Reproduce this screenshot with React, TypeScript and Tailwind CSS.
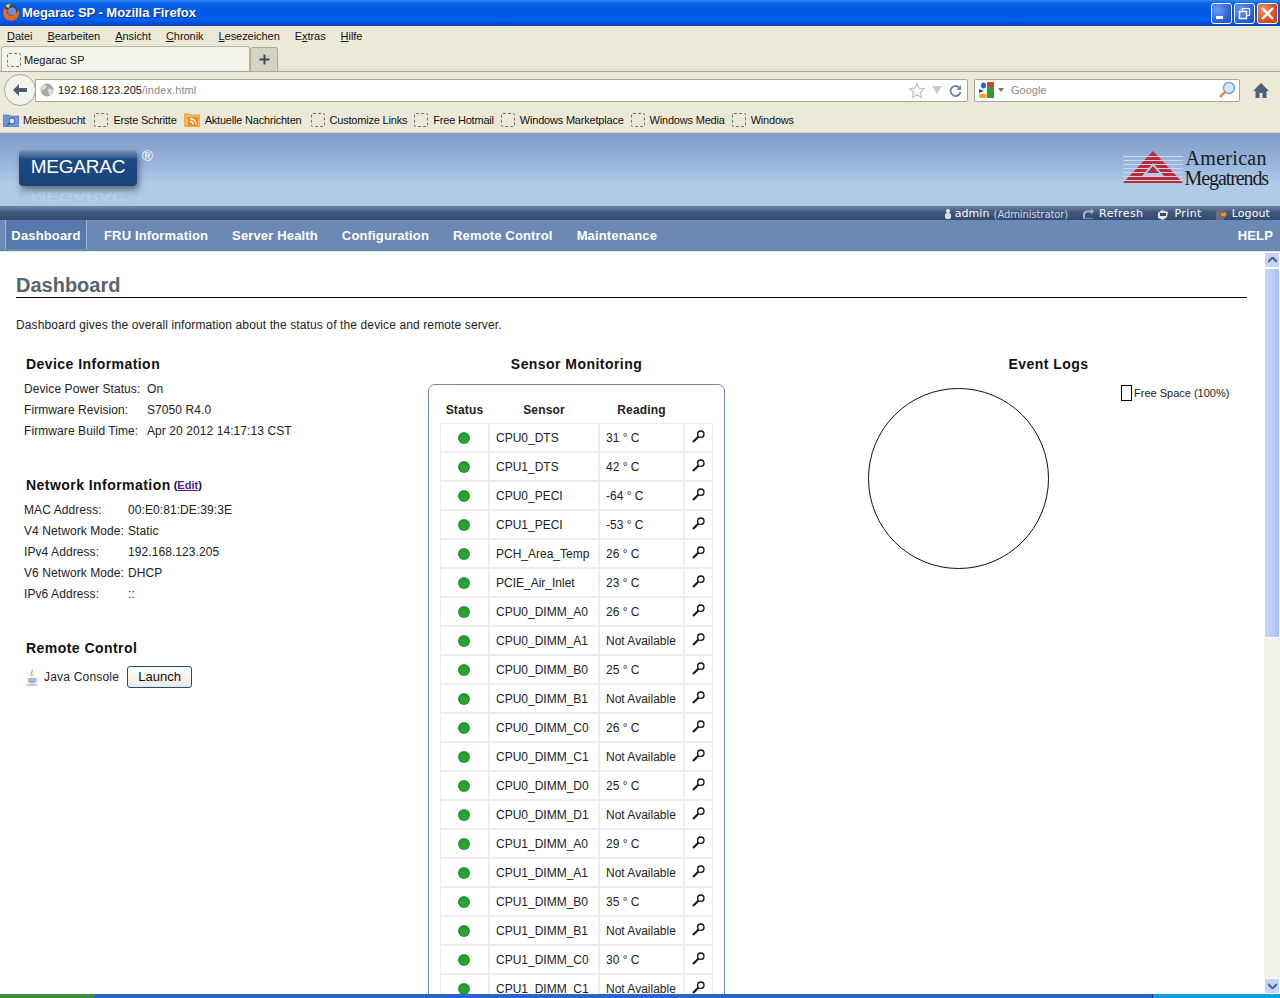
import React from "react";

const MENU = ["Datei", "Bearbeiten", "Ansicht", "Chronik", "Lesezeichen", "Extras", "Hilfe"];
const UNDERLINE: Record<string, number> = { Extras: 1 };
const NAV = ["FRU Information", "Server Health", "Configuration", "Remote Control", "Maintenance"];
const BOOKMARKS = ["Erste Schritte", "Aktuelle Nachrichten", "Customize Links", "Free Hotmail", "Windows Marketplace", "Windows Media", "Windows"];
const DEVICE = [
	["Device Power Status:", "On"],
	["Firmware Revision:", "S7050 R4.0"],
	["Firmware Build Time:", "Apr 20 2012 14:17:13 CST"],
];
const NETWORK = [
	["MAC Address:", "00:E0:81:DE:39:3E"],
	["V4 Network Mode:", "Static"],
	["IPv4 Address:", "192.168.123.205"],
	["V6 Network Mode:", "DHCP"],
	["IPv6 Address:", "::"],
];
const SENSORS = [
	["CPU0_DTS", "31 ° C"],
	["CPU1_DTS", "42 ° C"],
	["CPU0_PECI", "-64 ° C"],
	["CPU1_PECI", "-53 ° C"],
	["PCH_Area_Temp", "26 ° C"],
	["PCIE_Air_Inlet", "23 ° C"],
	["CPU0_DIMM_A0", "26 ° C"],
	["CPU0_DIMM_A1", "Not Available"],
	["CPU0_DIMM_B0", "25 ° C"],
	["CPU0_DIMM_B1", "Not Available"],
	["CPU0_DIMM_C0", "26 ° C"],
	["CPU0_DIMM_C1", "Not Available"],
	["CPU0_DIMM_D0", "25 ° C"],
	["CPU0_DIMM_D1", "Not Available"],
	["CPU1_DIMM_A0", "29 ° C"],
	["CPU1_DIMM_A1", "Not Available"],
	["CPU1_DIMM_B0", "35 ° C"],
	["CPU1_DIMM_B1", "Not Available"],
	["CPU1_DIMM_C0", "30 ° C"],
	["CPU1_DIMM_C1", "Not Available"],
];

const Placeholder = () => (
	<span className="block w-[14px] h-[14px] shrink-0 rounded-[2px] border border-dashed border-[#77756c]" />
);

const FirefoxLogo = () => (
	<svg width="18" height="18" viewBox="0 0 17 17" className="shrink-0">
		<circle cx="8.500" cy="8.500" r="7.500" fill="#27408f" />
		<circle cx="9.500" cy="7" r="3.800" fill="#6f8fd0" />
		<path d="M1.500 3c.2 3-1.500 6 1 10 3 3.800 9.500 3.800 12.200 0 2-3 1.500-6.500.5-8 0 2-1.500 3.500-2.700 4-1 2-4 3-6 1.500C4.500 9 4.500 7 6 5.500 4.500 5.500 2.500 5 1.500 3z" fill="#ee6a12" />
		<path d="M3.500 1c1.500-1 4-1 5 0C7 1.500 6 3 7 4.200 5.500 4 4 3 3.500 1z" fill="#fbbb2e" />
	</svg>
);

const Magnifier = () => (
	<svg width="13" height="13" viewBox="0 0 13 13" className="block mb-[2px]">
		<circle cx="8.800" cy="4.200" r="3.200" fill="none" stroke="#111" strokeWidth="1.300" />
		<path d="M6.300 6.700 1 12" stroke="#111" strokeWidth="2" />
	</svg>
);

const WindowButton = ({ kind }: { kind: "min" | "max" | "close" }) => (
	<span
		className={`flex items-center justify-center w-[21px] h-[21px] rounded-[3px] border border-white ${
			kind === "close"
				? "bg-[radial-gradient(circle_at_30%_30%,#f0906a,#d9441e_70%)]"
				: "bg-[radial-gradient(circle_at_30%_30%,#6f9bf0,#1f57d8_75%)]"
		}`}
	>
		<svg width="15" height="15" viewBox="0 0 15 15">
			{kind === "min" && <rect x="2" y="10" width="7" height="3" fill="#fff" />}
			{kind === "max" && (
				<g fill="none" stroke="#fff">
					<rect x="2.500" y="5.500" width="7" height="7" strokeWidth="1.400" />
					<path d="M5.500 5V2.500h7v7H10" strokeWidth="1.200" />
				</g>
			)}
			{kind === "close" && <path d="M2 2 13 13M13 2 2 13" stroke="#fff" strokeWidth="2.400" />}
		</svg>
	</span>
);

const BrowserChrome = () => (
	<div className="shrink-0 font-['Liberation_Sans',sans-serif] text-[11px] text-[#111] bg-[#ece9d8]">
		{/* title bar */}
		<div className="h-[26px] flex items-center pl-[2px] pr-[2px] bg-[linear-gradient(180deg,#2f86f5_0px,#0a5ee6_4px,#0058e6_14px,#0260ee_20px,#0046c4_25px,#003aa8_26px)]">
			<FirefoxLogo />
			<span className="ml-[2px] text-white font-bold text-[13px] tracking-[-0.05px] [text-shadow:1px_1px_0_#0a2f8a]">
				Megarac SP - Mozilla Firefox
			</span>
			<span className="ml-auto flex gap-[2px]">
				<WindowButton kind="min" />
				<WindowButton kind="max" />
				<WindowButton kind="close" />
			</span>
		</div>
		{/* menu */}
		<div className="h-[20px] flex items-center pl-[7px] gap-[15px] tracking-[-0.05px]">
			{MENU.map(item => {
				const at = UNDERLINE[item] ?? 0;
				return (
					<span key={item} className="leading-none">
						{item.slice(0, at)}
						<span className="underline">{item[at]}</span>
						{item.slice(at + 1)}
					</span>
				);
			})}
		</div>
		{/* tabs */}
		<div className="h-[26px] flex items-end border-b border-[#a8a595] bg-[linear-gradient(180deg,#ece9d8_70%,#e3e0cf)]">
			<div className="w-[249px] h-[25px] ml-[1px] flex items-center gap-[3px] pl-[5px] pt-[2px] bg-[#f5f4ec] border border-b-0 border-[#b5b2a2] rounded-t-[3px]">
				<Placeholder />
				<span>Megarac SP</span>
			</div>
			<div className="w-[28px] h-[24px] flex items-center justify-center bg-[#d6d3c3] border border-b-0 border-[#aaa798] rounded-t-[3px]">
				<svg width="11" height="11" viewBox="0 0 11 11">
					<path d="M5.500 .5v10M.5 5.500h10" stroke="#3d4a5e" strokeWidth="2" />
				</svg>
			</div>
		</div>
		{/* address bar */}
		<div className="h-[34px] flex items-center relative pt-[2px] pl-[35px] pr-[8px] gap-[6px]">
			<span className="absolute left-[4px] top-[2px] w-[32px] h-[32px] rounded-full bg-[#f4f3ee] border border-[#a9a79a] flex items-center justify-center z-10">
				<svg width="18" height="16" viewBox="0 0 18 16">
					<path d="M8 2 2 8l6 6V10h8V6H8z" fill="#4d5b70" />
				</svg>
			</span>
			<div className="w-[933px] h-[23px] flex items-center bg-white border border-[#a8a595] rounded-r-[2px] pl-[4px] pr-[5px]">
				<svg width="14" height="14" viewBox="0 0 14 14" className="shrink-0">
					<circle cx="7" cy="7" r="6.500" fill="#a9a9a6" />
					<path d="M4 2c2 0 3 1 2.500 2.500S3.500 6 2.500 8 1 5 2 3.500zM8 6c2-1 4 0 5 2-1 3-2 4.500-3.500 4.500C9 10 7 8 8 6z" fill="#dcdcd8" />
				</svg>
				<span className="ml-[4px] text-[#111] tracking-[0.1px]">
					192.168.123.205<span className="text-[#8a8a8a]">/index.html</span>
				</span>
				<svg width="18" height="17" viewBox="0 0 18 17" className="ml-auto">
					<path d="m9 1.500 2.200 4.700 5.100.6-3.800 3.500 1 5.100L9 13l-4.500 2.400 1-5.100L1.700 6.800l5.100-.6z" fill="#fafafa" stroke="#c3c3c0" strokeWidth="1.200" />
				</svg>
				<svg width="10" height="8" viewBox="0 0 10 8" className="ml-[6px]">
					<path d="M0 0h10L5 8z" fill="#c9c9c5" />
				</svg>
				<svg width="13" height="13" viewBox="0 0 13 13" className="ml-[7px]">
					<path d="M11 4.500A5 5 0 1 0 11.500 8" fill="none" stroke="#76889f" strokeWidth="2" />
					<path d="M12 1v5H7.500z" fill="#76889f" />
				</svg>
			</div>
			<div className="w-[266px] h-[23px] flex items-center bg-white border border-[#a8a595] rounded-[2px] pl-[4px] pr-[3px]">
				<svg width="16" height="16" viewBox="0 0 16 16" className="shrink-0">
					<rect x="8" y="0" width="7" height="5" fill="#d9402c" />
					<rect x="8" y="5" width="7" height="11" fill="#2f9a3a" />
					<ellipse cx="4.500" cy="3.500" rx="2.500" ry="3" fill="#2763c9" />
					<path d="M0 7l5 2-5 2z" fill="#1f4f9e" />
					<ellipse cx="4" cy="14" rx="4" ry="2.400" fill="#eea920" />
				</svg>
				<svg width="6" height="4" viewBox="0 0 6 4" className="ml-[3px]">
					<path d="M0 0h6L3 4z" fill="#777" />
				</svg>
				<span className="ml-[7px] text-[#8f8f8a]">Google</span>
				<svg width="18" height="18" viewBox="0 0 18 18" className="ml-auto">
					<circle cx="11" cy="7" r="5.500" fill="#d7e5fb" stroke="#7d9fdc" strokeWidth="1.500" />
					<path d="M7 11 2 16" stroke="#d18a3c" strokeWidth="2.400" />
				</svg>
			</div>
			<svg width="16" height="15" viewBox="0 0 16 15" className="ml-[7px]">
				<path d="M8 0 0 8h2.500v7h4v-5h3v5h4V8H16z" fill="#4f6079" />
			</svg>
		</div>
		{/* bookmarks */}
		<div className="h-[26px] flex items-center pl-[3px] pt-[2px] tracking-[-0.2px]">
			<span className="flex items-center gap-[4px] mr-[9px]">
				<svg width="16" height="14" viewBox="0 0 16 14">
					<path d="M0 2h6l1 1h9v11H0z" fill="#6f97d6" stroke="#4a6fa8" strokeWidth=".6" />
					<circle cx="9" cy="8" r="3" fill="#dce9fb" stroke="#2f5a9a" />
					<path d="M7 10 4 12.500" stroke="#2f5a9a" strokeWidth="1.400" />
				</svg>
				Meistbesucht
			</span>
			<span className="flex items-center gap-[5px] mr-[7px]">
				<Placeholder />
				{BOOKMARKS[0]}
			</span>
			<span className="flex items-center gap-[5px] mr-[9px]">
				<svg width="16" height="14" viewBox="0 0 16 14">
					<path d="M0 1h6l1 1h9v12H0z" fill="#f3b566" stroke="#d98a2c" strokeWidth=".6" />
					<rect x="4" y="4" width="10" height="9" fill="#ec8a24" />
					<path d="M6 11.500h.1M6 8.500a3 3 0 0 1 3 3M6 5.500a6 6 0 0 1 6 6" stroke="#fff" strokeWidth="1.300" fill="none" />
				</svg>
				{BOOKMARKS[1]}
			</span>
			{BOOKMARKS.slice(2).map(item => (
				<span key={item} className="flex items-center gap-[5px] mr-[7px]">
					<Placeholder />
					{item}
				</span>
			))}
		</div>
	</div>
);

const AppHeader = () => (
	<div className="shrink-0 border-t border-[#d8d5c4]">
		<div className="h-[73px] relative flex items-center justify-between bg-[linear-gradient(180deg,#7e9bc8,#9ab6dc_32px,#b0cae8_50px)]">
			<div className="relative ml-[19px] -mt-[4px] w-[118px] h-[36px] rounded-[4px] bg-[linear-gradient(180deg,#7c93b4_0px,#47699a_6px,#1d4a86_9px,#1a4277)] shadow-[2px_4px_6px_rgba(40,50,70,0.6)] flex items-center justify-center font-['Liberation_Sans',sans-serif] text-[19px] tracking-[-0.2px] text-white">
				MEGARAC
				<span className="absolute left-[123px] -top-[2px] text-[15px] leading-none text-white">®</span>
				<span className="absolute left-0 top-[38px] w-[118px] h-[18px] flex items-start justify-center pt-[2px] text-[19px] leading-[14px] text-[#c9d8ec] opacity-50 scale-y-[-0.6] bg-[linear-gradient(0deg,#9fb6d6,#b0cae8)]">
					MEGARAC
				</span>
			</div>
			<div className="flex items-center mr-[12px] -mt-[3px]">
				<svg width="60" height="33" viewBox="0 0 60 33" className="shrink-0 -mt-[2px]">
					<path d="M30 0 60 32H0z" fill="#bf2a34" />
					<g stroke="#c9d8ec" strokeWidth="1">
						<path d="M0 29.500h60M0 25.500h60M0 21.500h60M0 17.500h60M0 13.500h60M0 9.500h60M0 5.500h60" />
					</g>
					<path d="M30 12 41 25H19z" fill="#b0cae8" />
					<path d="M30 15 36 22H24z" fill="#bf2a34" />
				</svg>
				<div className="font-['Liberation_Serif',serif] text-[20px] leading-[20px] text-[#1a1a1a] ml-[2px]">
					<div className="pl-[1px] tracking-[0.3px]">American</div>
					<div className="tracking-[-1.1px]">Megatrends</div>
				</div>
			</div>
		</div>
		<div className="h-[14px] flex items-center justify-end gap-[14px] pt-[2px] pr-[10px] font-['DejaVu_Sans',sans-serif] text-[11px] text-white tracking-[0.4px] bg-[linear-gradient(180deg,#6f87a8,#41597c_6px,#334a6d)]">
			<span className="flex items-center gap-[4px] tracking-[0.1px]">
				<svg width="6" height="10" viewBox="0 0 6 10">
					<circle cx="3" cy="2" r="2" fill="#eee" />
					<rect x="0" y="4" width="6" height="6" rx="2" fill="#ddd" />
				</svg>
				admin <span className="text-[10px] tracking-[-0.1px] text-[#cbd6e6]">(Administrator)</span>
			</span>
			<span className="flex items-center gap-[5px]">
				<svg width="12" height="11" viewBox="0 0 12 11">
					<path d="M10 2.500H5C3 2.500 2 4 2 6v3.500" fill="none" stroke="#a8b2c0" strokeWidth="2" />
					<path d="M9 0l3 2.500L9 5zM2 9.500h9" fill="#a8b2c0" stroke="#a8b2c0" strokeWidth=".6" />
				</svg>
				Refresh
			</span>
			<span className="flex items-center gap-[5px]">
				<svg width="12" height="11" viewBox="0 0 12 11">
					<path d="M1 4 5 1l6 2-1 5-4 3-5-2z" fill="#e2e6ec" />
					<path d="M3 4h6v3H3z" fill="#3a4a64" />
				</svg>
				Print
			</span>
			<span className="flex items-center gap-[5px] tracking-[0.1px]">
				<svg width="11" height="11" viewBox="0 0 11 11">
					<rect x="0" y="0" width="8" height="11" fill="#6c6f78" />
					<path d="M5 4h3V2l3 3.500-3 3V7H5z" fill="#e8922a" />
				</svg>
				Logout
			</span>
		</div>
		<div className="h-[31px] flex items-center justify-between bg-[#6b89b4] border-b border-[#5f8ea0] font-['Liberation_Sans',sans-serif] font-bold text-[13px] tracking-[0.15px] text-white">
			<div className="flex items-start pl-[5px] h-full">
				<span className="h-[29px] w-[82px] pt-[2px] flex items-center justify-center bg-[#567aab] border-x border-[#9bb5d6]">
					Dashboard
				</span>
				<div className="flex items-center h-full pt-[1px] gap-[24px] ml-[17px]">
					{NAV.map(item => (
						<span key={item}>{item}</span>
					))}
				</div>
			</div>
			<span className="pr-[7px] pt-[1px]">HELP</span>
		</div>
	</div>
);

const Scrollbar = () => (
	<div className="w-[16px] shrink-0 flex flex-col bg-[#f3f2ea]">
		<div className="h-[16px] rounded-[2px] bg-[#c3d5fb] border border-white flex items-center justify-center">
			<svg width="9" height="6" viewBox="0 0 9 6">
				<path d="M0 5 4.500 .5 9 5" fill="none" stroke="#4d6185" strokeWidth="2" />
			</svg>
		</div>
		<div className="h-[370px] rounded-[2px] bg-[linear-gradient(90deg,#c3d5fb,#b9cdfa_60%,#a9c0f4)] border border-white" />
		<div className="flex-1" />
		<div className="h-[16px] rounded-[2px] bg-[#c3d5fb] border border-white flex items-center justify-center">
			<svg width="9" height="6" viewBox="0 0 9 6">
				<path d="M0 1 4.500 5.500 9 1" fill="none" stroke="#4d6185" strokeWidth="2" />
			</svg>
		</div>
	</div>
);

const InfoRows = ({ rows, labelWidth }: { rows: string[][]; labelWidth: string }) => (
	<div className="mt-[4px] ml-[8px] tracking-[0.08px]">
		{rows.map(([label, value]) => (
			<div key={label} className="h-[21px] flex items-center">
				<span className={labelWidth}>{label}</span>
				<span>{value}</span>
			</div>
		))}
	</div>
);

const SectionTitle = ({ children }: { children: React.ReactNode }) => (
	<h2 className="h-[20px] ml-[10px] flex items-center font-bold text-[14px] tracking-[0.45px] text-[#111]">{children}</h2>
);

const LeftColumn = () => (
	<div className="w-[412px] shrink-0">
		<SectionTitle>Device Information</SectionTitle>
		<InfoRows rows={DEVICE} labelWidth="w-[123px]" />
		<div className="mt-[34px]">
			<SectionTitle>
				Network Information
				<span className="ml-[3px] text-[11px] tracking-normal">
					(<span className="underline text-[#551a8b]">Edit</span>)
				</span>
			</SectionTitle>
		</div>
		<InfoRows rows={NETWORK} labelWidth="w-[104px]" />
		<div className="mt-[34px]">
			<SectionTitle>Remote Control</SectionTitle>
		</div>
		<div className="mt-[8px] ml-[9px] flex items-center tracking-[0.2px]">
			<svg width="14" height="17" viewBox="0 0 14 17" className="shrink-0">
				<path d="M7 0c2.500 3-2.500 4.500 0 8C3.500 6 7 3.500 7 0z" fill="#e8882a" />
				<path d="M9 3c0 2-2 2.500-1 5-2-2 0-3.500 1-5z" fill="#f0a850" />
				<path d="M3 9h8v3c0 1.500-1.500 2.500-4 2.500S3 13.500 3 12z" fill="#a3b8d0" />
				<path d="M11 10c2 0 2 2 0 2.500" fill="none" stroke="#a3b8d0" />
				<ellipse cx="7" cy="15.800" rx="6.500" ry="1.200" fill="#bccbdc" />
			</svg>
			<span className="ml-[5px]">Java Console</span>
			<button
				type="button"
				className="ml-[8px] w-[65px] h-[22px] rounded-[3px] border border-[#1f4b80] bg-[linear-gradient(180deg,#fff,#ece9dc)] text-[13px] tracking-normal text-[#111]"
			>
				Launch
			</button>
		</div>
	</div>
);

const SensorPanel = () => (
	<div className="w-[297px] shrink-0">
		<h2 className="h-[20px] flex items-center justify-center font-bold text-[14px] tracking-[0.45px] text-[#111]">
			Sensor Monitoring
		</h2>
		<div className="mt-[10px] rounded-[7px] border border-[#6f88ad] pt-[15px] px-[11px] pb-[12px]">
			<div className="grid grid-cols-[47px_108px_83px_27px] gap-x-[2px] pl-[1px] h-[23px] font-bold tracking-[0.15px] text-center leading-[20px]">
				<span>Status</span>
				<span>Sensor</span>
				<span>Reading</span>
				<span />
			</div>
			<div className="grid grid-cols-[47px_108px_83px_27px] gap-[2px] p-[1px] bg-[#eeeeee]">
				{SENSORS.map(([name, reading]) => (
					<React.Fragment key={name}>
						<div className="h-[27px] bg-white flex items-center justify-center">
							<span className="block w-[12px] h-[12px] mr-[1px] rounded-full bg-[radial-gradient(circle_at_50%_60%,#2fa83a,#23962e_65%,#4cc455)]" />
						</div>
						<div className="h-[27px] bg-white flex items-center pl-[6px]">{name}</div>
						<div className="h-[27px] bg-white flex items-center pl-[6px]">{reading}</div>
						<div className="h-[27px] bg-white flex items-center justify-center">
							<Magnifier />
						</div>
					</React.Fragment>
				))}
			</div>
		</div>
	</div>
);

const EventLogs = () => (
	<div className="flex-1 min-w-0">
		<h2 className="h-[20px] flex items-center justify-center ml-[125px] font-bold text-[14px] tracking-[0.45px] text-[#111]">
			Event Logs
		</h2>
		<div className="mt-[14px] ml-[143px] flex items-start">
			<svg width="181" height="181" viewBox="0 0 181 181" className="shrink-0">
				<circle cx="90.500" cy="90.500" r="90" fill="#fff" stroke="#111" />
			</svg>
			<div className="ml-[72px] mt-[-3px] flex items-center whitespace-nowrap">
				<span className="block w-[11px] h-[16px] border border-black" />
				<span className="ml-[2px] text-[11px]">Free Space (100%)</span>
			</div>
		</div>
	</div>
);

const App = () => (
	<div className="w-[1280px] h-[998px] overflow-hidden flex flex-col bg-white">
		<BrowserChrome />
		<AppHeader />
		<div className="flex-1 min-h-0 flex border-t border-[#e8e8e4] overflow-hidden">
			<main className="flex-1 min-w-0 overflow-hidden pl-[16px] pr-[17px] font-['Liberation_Sans',sans-serif] text-[12px] text-[#222]">
				<h1 className="h-[46px] pt-[21px] leading-[25px] font-bold text-[20px] text-[#59636e] border-b border-black">Dashboard</h1>
				<p className="mt-[20px] h-[16px] leading-[14px] tracking-[0.12px]">
					Dashboard gives the overall information about the status of the device and remote server.
				</p>
				<div className="mt-[20px] flex">
					<LeftColumn />
					<SensorPanel />
					<EventLogs />
				</div>
			</main>
			<Scrollbar />
		</div>
		<div className="h-[4px] shrink-0 flex bg-[#245edb]">
			<div className="w-[94px] bg-[#3c8f3c]" />
			<div className="flex-1 bg-[#2a63d8]" />
			<div className="w-[128px] bg-[#12a0e8] border-l border-[#0a3a90]" />
		</div>
	</div>
);

export default App;
